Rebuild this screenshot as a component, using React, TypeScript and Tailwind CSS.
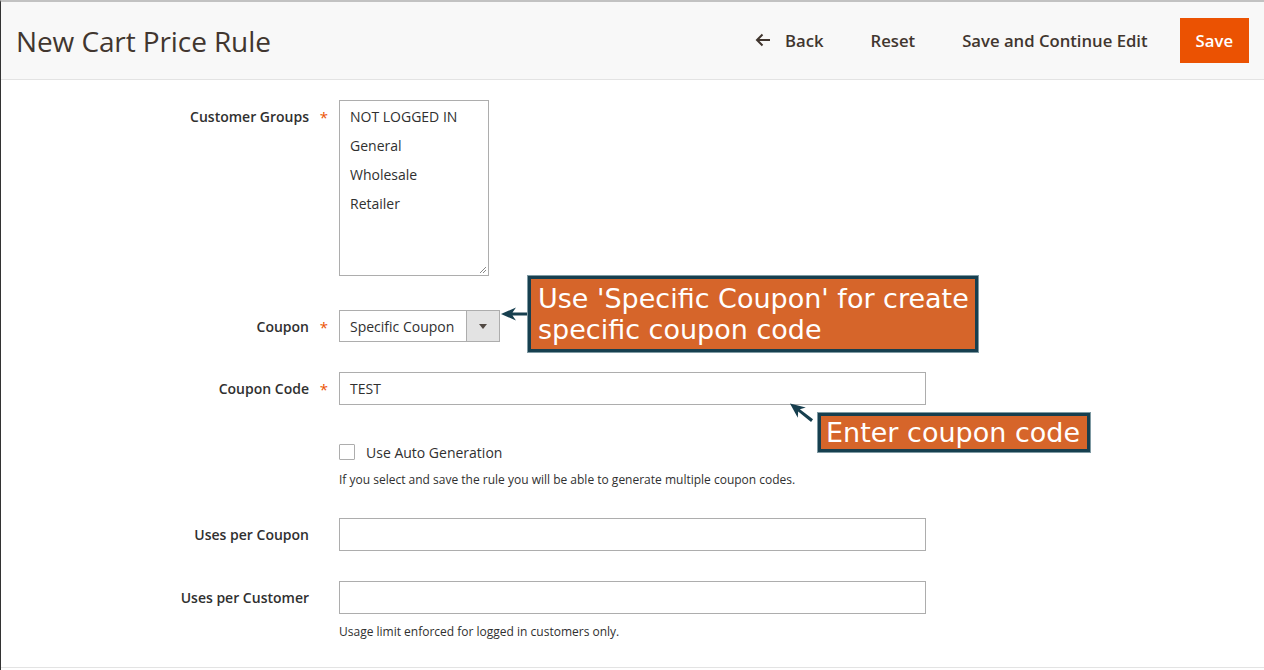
import React from "react";

function Req({ on = true }: { on?: boolean }) {
  return (
    <span className="w-[30px] text-center text-[15px] leading-[32px] text-[#eb5202]">
      {on ? "*" : ""}
    </span>
  );
}

function Label({ text, req = true }: { text: string; req?: boolean }) {
  return (
    <div className="flex w-[338px] shrink-0 justify-end pt-[1px]">
      <span className="text-[14px] font-semibold leading-[32px] text-[#303030]">{text}</span>
      <Req on={req} />
    </div>
  );
}

function TextInput({ value = "" }: { value?: string }) {
  return (
    <div className="flex h-[33px] w-[587px] items-center border border-[#adadad] bg-white pl-[10px] text-[14px] text-[#303030]">
      {value}
    </div>
  );
}

function Arrow() {
  // hand-drawn style annotation arrow, pointing left
  return (
    <svg width="30" height="20" viewBox="0 0 30 20">
      <path
        d="M1 10 L16 3.5 L12.5 8.6 L29 8.4 L29 11.6 L12.5 11.4 L16 16.5 Z"
        fill="#173f4f"
      />
    </svg>
  );
}

export default function App() {
  return (
    <div className="relative h-[670px] w-full overflow-hidden border-l border-t-[2px] border-l-[#333] border-t-[#c2c2c2] bg-white font-['Open_Sans',sans-serif]">
      {/* page header */}
      <div className="flex h-[78px] items-center justify-between border-b border-[#e3e3e3] bg-[#f8f8f8] pl-[15px] pr-[15px]">
        <h1 className="text-[28px] font-normal tracking-[-0.1px] text-[#41362f]">New Cart Price Rule</h1>
        <div className="flex items-center gap-[17px] text-[16.7px] font-semibold text-[#41362f]">
          <button className="flex items-center gap-[14px] px-[15px]">
            <svg width="16" height="14" viewBox="0 0 16 14">
              <path d="M15 7 H2 M7.5 1.5 L2 7 L7.5 12.5" fill="none" stroke="#41362f" strokeWidth="2" />
            </svg>
            Back
          </button>
          <button className="px-[15px]">Reset</button>
          <button className="px-[15px]">Save and Continue Edit</button>
          <button className="h-[45px] bg-[#eb5202] px-[16px] text-white">Save</button>
        </div>
      </div>

      {/* form */}
      <div className="h-[588px] border-b border-[#e3e3e3]">
        <div className="flex pt-[20px]">
          <Label text="Customer Groups" />
          <div className="relative h-[176px] w-[150px] border border-[#adadad] pt-[1px] text-[14px] text-[#303030]">
            {["NOT LOGGED IN", "General", "Wholesale", "Retailer"].map((g) => (
              <div key={g} className="pl-[10px] leading-[29px]">
                {g}
              </div>
            ))}
            <svg className="absolute bottom-[1px] right-[1px]" width="8" height="8" viewBox="0 0 8 8">
              <path d="M7 1 L1 7 M7 4 L4 7" stroke="#888" strokeWidth="1" />
            </svg>
          </div>
        </div>

        <div className="mt-[34px] flex">
          <Label text="Coupon" />
          <div className="flex h-[32px] w-[161px] border border-[#adadad] text-[14px] text-[#303030]">
            <div className="flex flex-1 items-center pl-[10px]">Specific Coupon</div>
            <div className="flex w-[33px] items-center justify-center border-l border-[#adadad] bg-[#e3e3e3]">
              <svg width="8" height="5" viewBox="0 0 8 5">
                <path d="M0 0 H8 L4 5 Z" fill="#514943" />
              </svg>
            </div>
          </div>
        </div>

        <div className="mt-[29px] flex">
          <Label text="Coupon Code" />
          <TextInput value="TEST" />
        </div>

        <div className="mt-[37px] flex">
          <div className="w-[338px] shrink-0" />
          <div>
            <label className="flex h-[20px] items-center gap-[11px] text-[14px] text-[#303030]">
              <span className="h-[16px] w-[16px] rounded-[1px] border border-[#adadad] bg-white" />
              Use Auto Generation
            </label>
            <p className="mt-[9px] text-[12px] leading-[18px] text-[#303030]">
              If you select and save the rule you will be able to generate multiple coupon codes.
            </p>
          </div>
        </div>

        <div className="mt-[29px] flex">
          <Label text="Uses per Coupon" req={false} />
          <TextInput />
        </div>

        <div className="mt-[30px] flex">
          <Label text="Uses per Customer" req={false} />
          <div>
            <TextInput />
            <p className="mt-[9px] text-[12px] leading-[18px] text-[#303030]">
              Usage limit enforced for logged in customers only.
            </p>
          </div>
        </div>
      </div>

      {/* annotations */}
      <div className="absolute left-[499px] top-[302px]">
        <Arrow />
      </div>
      <div className="absolute left-[527px] top-[274px] h-[76px] w-[450px] border-[3px] border-[#173f4f] bg-[#d6652a] pl-[7px] pt-[4px] font-['DejaVu_Sans',sans-serif] text-[27px] leading-[31px] text-white outline outline-1 outline-[#7f9aa3]">
        Use 'Specific Coupon' for create
        <br />
        specific coupon code
      </div>

      <div className="absolute left-[785px] top-[400px] rotate-[38deg]">
        <Arrow />
      </div>
      <div className="absolute left-[817px] top-[411px] h-[39px] w-[272px] border-[3px] border-[#173f4f] bg-[#d6652a] pl-[5px] pt-[1px] font-['DejaVu_Sans',sans-serif] text-[27px] leading-[31px] text-white outline outline-1 outline-[#7f9aa3]">
        Enter coupon code
      </div>
    </div>
  );
}
